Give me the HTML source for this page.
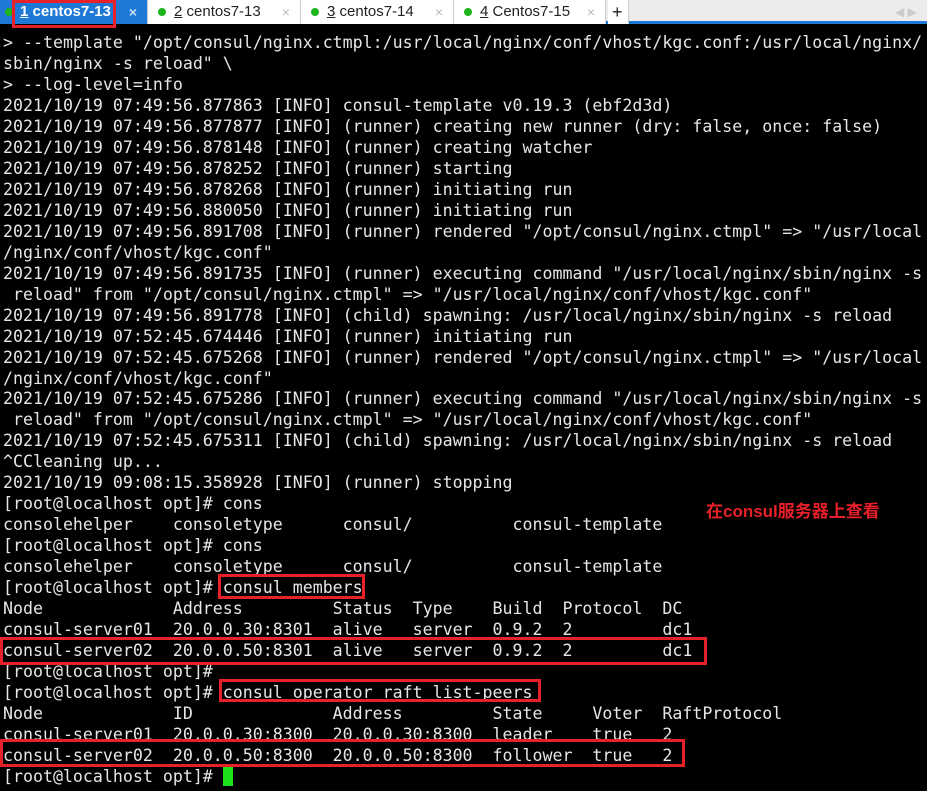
<!DOCTYPE html>
<html><head><meta charset="utf-8"><style>
*{margin:0;padding:0;box-sizing:border-box}
body{width:927px;height:791px;background:#000;overflow:hidden;position:relative;font-family:"DejaVu Sans Mono","Liberation Mono",monospace}
#bar{position:absolute;left:0;top:0;width:927px;height:24px;background:#ececec;border-bottom:3px solid #1e78d6;font-family:"Liberation Sans","DejaVu Sans",sans-serif;font-size:15px}
.tab{position:absolute;top:0;height:24px;background:#fff;border-right:1px solid #ccc;color:#222;line-height:24px;padding-left:26px}
.tab .d{position:absolute;left:10px;top:8px;width:8px;height:8px;border-radius:50%;background:#1cb51c}
.tab .x{position:absolute;right:10px;top:0;color:#bbb;font-size:14px}
.act{background:#1e78d6;color:#fff;font-weight:bold;padding-left:20px}
#term{position:absolute;left:3px;top:33px;color:#e6e6e6;font-size:16.6px;line-height:20.97px;white-space:pre}
.box{position:absolute;border:3px solid #e8202a}
</style></head><body>
<div id="bar">
<div class="tab act" style="left:0;width:148px"><span class="d" style="left:5px"></span><u>1</u> centos7-13<span class="x" style="color:#cde">×</span></div>
<div class="tab" style="left:148px;width:153px"><span class="d"></span><u>2</u> centos7-13<span class="x">×</span></div>
<div class="tab" style="left:301px;width:153px"><span class="d"></span><u>3</u> centos7-14<span class="x">×</span></div>
<div class="tab" style="left:454px;width:152px"><span class="d"></span><u>4</u> Centos7-15<span class="x">×</span></div>
<div class="tab" style="left:608px;width:21px;padding-left:4px;font-size:18px">+</div>
<div style="position:absolute;left:895px;top:5px;color:#ccc;font-size:12px">◀ ▶</div>
</div>
<div class="box" style="left:12px;top:0;width:104px;height:28px"></div>
<div id="term">&gt; --template "/opt/consul/nginx.ctmpl:/usr/local/nginx/conf/vhost/kgc.conf:/usr/local/nginx/
sbin/nginx -s reload" \
&gt; --log-level=info
2021/10/19 07:49:56.877863 [INFO] consul-template v0.19.3 (ebf2d3d)
2021/10/19 07:49:56.877877 [INFO] (runner) creating new runner (dry: false, once: false)
2021/10/19 07:49:56.878148 [INFO] (runner) creating watcher
2021/10/19 07:49:56.878252 [INFO] (runner) starting
2021/10/19 07:49:56.878268 [INFO] (runner) initiating run
2021/10/19 07:49:56.880050 [INFO] (runner) initiating run
2021/10/19 07:49:56.891708 [INFO] (runner) rendered "/opt/consul/nginx.ctmpl" =&gt; "/usr/local
/nginx/conf/vhost/kgc.conf"
2021/10/19 07:49:56.891735 [INFO] (runner) executing command "/usr/local/nginx/sbin/nginx -s
 reload" from "/opt/consul/nginx.ctmpl" =&gt; "/usr/local/nginx/conf/vhost/kgc.conf"
2021/10/19 07:49:56.891778 [INFO] (child) spawning: /usr/local/nginx/sbin/nginx -s reload
2021/10/19 07:52:45.674446 [INFO] (runner) initiating run
2021/10/19 07:52:45.675268 [INFO] (runner) rendered "/opt/consul/nginx.ctmpl" =&gt; "/usr/local
/nginx/conf/vhost/kgc.conf"
2021/10/19 07:52:45.675286 [INFO] (runner) executing command "/usr/local/nginx/sbin/nginx -s
 reload" from "/opt/consul/nginx.ctmpl" =&gt; "/usr/local/nginx/conf/vhost/kgc.conf"
2021/10/19 07:52:45.675311 [INFO] (child) spawning: /usr/local/nginx/sbin/nginx -s reload
^CCleaning up...
2021/10/19 09:08:15.358928 [INFO] (runner) stopping
[root@localhost opt]# cons
consolehelper    consoletype      consul/          consul-template
[root@localhost opt]# cons
consolehelper    consoletype      consul/          consul-template
[root@localhost opt]# consul members
Node             Address         Status  Type    Build  Protocol  DC
consul-server01  20.0.0.30:8301  alive   server  0.9.2  2         dc1
consul-server02  20.0.0.50:8301  alive   server  0.9.2  2         dc1
[root@localhost opt]#
[root@localhost opt]# consul operator raft list-peers
Node             ID              Address         State     Voter  RaftProtocol
consul-server01  20.0.0.30:8300  20.0.0.30:8300  leader    true   2
consul-server02  20.0.0.50:8300  20.0.0.50:8300  follower  true   2
[root@localhost opt]# <span style="background:#1de01d"> </span></div>
<div style="position:absolute;left:706px;top:497px;color:#e8202a;font-weight:bold;font-size:17px;font-family:'Liberation Sans','Noto Sans CJK SC',sans-serif">在consul服务器上查看</div>
<div class="box" style="left:218px;top:574px;width:147px;height:25px"></div>
<div class="box" style="left:0;top:637px;width:707px;height:28px"></div>
<div class="box" style="left:219px;top:679px;width:322px;height:23px"></div>
<div class="box" style="left:0;top:739px;width:685px;height:28px"></div>
</body></html>
